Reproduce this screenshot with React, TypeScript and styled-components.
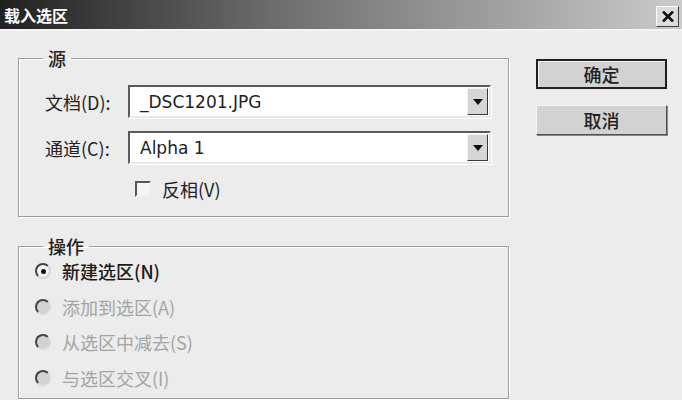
import React from "react";
import styled, { createGlobalStyle } from "styled-components";

const GlobalStyle = createGlobalStyle`
    html, body {
        margin: 0;
        padding: 0;
        background: #ececec;
    }
    body {
        font-family: "Noto Sans CJK SC", "DejaVu Sans", sans-serif;
    }
`;

const options = [
    { label: "新建选区(N)", checked: true, disabled: false },
    { label: "添加到选区(A)", checked: false, disabled: true },
    { label: "从选区中减去(S)", checked: false, disabled: true },
    { label: "与选区交叉(I)", checked: false, disabled: true },
];

const Caret = () => (
    <svg width='10' height='6' viewBox='0 0 10 6'>
        <path d='M0 0 H10 L5 6 Z' fill='#111' />
    </svg>
);

export default function App() {
    return (
        <>
            <GlobalStyle />
            <Window>
                <TitleBar>
                    <Title>载入选区</Title>
                    <CloseButton>
                        <svg width='12' height='11' viewBox='0 0 12 11'>
                            <path
                                d='M1 0.5 L11 10.5 M11 0.5 L1 10.5'
                                stroke='#111'
                                strokeWidth='2.6'
                            />
                        </svg>
                    </CloseButton>
                </TitleBar>

                <Body>
                    <Left>
                        <Group $height={170} $top={16}>
                            <Legend>源</Legend>
                            <FieldRow>
                                <FieldLabel>文档(D):</FieldLabel>
                                <Select>
                                    <SelectText>_DSC1201.JPG</SelectText>
                                    <ArrowButton>
                                        <Caret />
                                    </ArrowButton>
                                </Select>
                            </FieldRow>
                            <FieldRow>
                                <FieldLabel>通道(C):</FieldLabel>
                                <Select>
                                    <SelectText>Alpha 1</SelectText>
                                    <ArrowButton>
                                        <Caret />
                                    </ArrowButton>
                                </Select>
                            </FieldRow>
                            <CheckRow>
                                <CheckBox />
                                <CheckLabel>反相(V)</CheckLabel>
                            </CheckRow>
                        </Group>

                        <Group $height={164} $top={0}>
                            <Legend>操作</Legend>
                            <RadioList>
                                {options.map((o) => (
                                    <RadioRow key={o.label}>
                                        <Radio $disabled={o.disabled}>
                                            {o.checked && <Dot />}
                                        </Radio>
                                        <RadioLabel $disabled={o.disabled}>
                                            {o.label}
                                        </RadioLabel>
                                    </RadioRow>
                                ))}
                            </RadioList>
                        </Group>
                    </Left>

                    <Buttons>
                        <Button $default>确定</Button>
                        <Button>取消</Button>
                    </Buttons>
                </Body>
            </Window>
        </>
    );
}

const Window = styled.div`
    width: 682px;
    height: 400px;
    background: #ececec;
    overflow: hidden;
`;

const TitleBar = styled.div`
    height: 29px;
    display: flex;
    align-items: center;
    justify-content: space-between;
    padding: 0 3px 0 4px;
    background: linear-gradient(to right, #202020, #6c6c6c 40%, #cbcbcb);
    border-bottom: 2px solid #f4f4f4;
`;

const Title = styled.div`
    color: #fff;
    font-weight: 700;
    font-size: 16px;
    font-family: "Noto Sans CJK SC", sans-serif;
    line-height: 1;
`;

const CloseButton = styled.div`
    width: 23px;
    height: 21px;
    box-sizing: border-box;
    display: flex;
    align-items: center;
    justify-content: center;
    background: #dcdcdc;
    border: 1px solid;
    border-color: #fff #404040 #404040 #fff;
    margin-top: 3px;
`;

const Body = styled.div`
    display: flex;
    align-items: flex-start;
    padding: 16px 0 0 18px;
`;

const Left = styled.div`
    display: flex;
    flex-direction: column;
    gap: 18px;
    width: 491px;
`;

const Group = styled.fieldset<{ $height: number; $top: number }>`
    margin: 0;
    height: ${(p) => p.$height}px;
    box-sizing: border-box;
    border: 1px solid #9c9c9c;
    box-shadow: inset 1px 1px 0 #fff, 1px 1px 0 #fff;
    padding: ${(p) => p.$top}px 17px 0 26px;
    display: flex;
    flex-direction: column;
`;

const Legend = styled.legend`
    margin-left: -2px;
    padding: 0 5px;
    font-size: 18px;
    line-height: 22px;
    color: #222;
    font-weight: 500;
`;

const FieldRow = styled.div`
    display: flex;
    align-items: center;
    margin-bottom: 13px;
`;

const FieldLabel = styled.div`
    width: 83px;
    font-size: 18px;
    color: #222;
    white-space: nowrap;
`;

const Select = styled.div`
    flex: 1;
    height: 33px;
    box-sizing: border-box;
    display: flex;
    align-items: center;
    background: #fff;
    border: 2px solid;
    border-color: #5a5a5a #e8e8e8 #e8e8e8 #5a5a5a;
    box-shadow: 1px 1px 0 #fff;
    padding: 0 1px 0 10px;
`;

const SelectText = styled.div`
    flex: 1;
    font-family: "DejaVu Sans", sans-serif;
    font-size: 17px;
    color: #222;
`;

const ArrowButton = styled.div`
    width: 21px;
    height: 27px;
    box-sizing: border-box;
    display: flex;
    align-items: center;
    justify-content: center;
    background: #d6d6d6;
    border: 1px solid;
    border-color: #f4f4f4 #3a3a3a #3a3a3a #f4f4f4;
`;

const CheckRow = styled.div`
    display: flex;
    align-items: center;
    gap: 11px;
    padding-left: 90px;
    margin-top: -1px;
`;

const CheckBox = styled.div`
    width: 16px;
    height: 16px;
    box-sizing: border-box;
    border: 2px solid;
    border-color: #555 #f0f0f0 #f0f0f0 #555;
    background: #f4f4f4;
`;

const CheckLabel = styled.div`
    font-size: 18px;
    color: #222;
`;

const RadioList = styled.div`
    display: flex;
    flex-direction: column;
    gap: 7.5px;
    margin-left: -10px;
`;

const RadioRow = styled.div`
    display: flex;
    align-items: center;
    gap: 11px;
    height: 28px;
`;

const Radio = styled.div<{ $disabled?: boolean }>`
    width: 16px;
    height: 16px;
    box-sizing: border-box;
    border-radius: 50%;
    border: 2px solid;
    border-color: #444 #d8d8d8 #d8d8d8 #444;
    background: ${(p) => (p.$disabled ? "#d2d2d2" : "#f4f4f4")};
    display: flex;
    align-items: center;
    justify-content: center;
`;

const Dot = styled.div`
    width: 5px;
    height: 5px;
    border-radius: 50%;
    background: #111;
`;

const RadioLabel = styled.div<{ $disabled?: boolean }>`
    font-size: 18px;
    color: ${(p) => (p.$disabled ? "#a4a4a4" : "#1a1a1a")};
    font-weight: ${(p) => (p.$disabled ? 400 : 500)};
`;

const Buttons = styled.div`
    display: flex;
    flex-direction: column;
    gap: 16px;
    margin-left: 27px;
    padding-top: 12px;
`;

const Button = styled.div<{ $default?: boolean }>`
    width: 131px;
    height: 30px;
    box-sizing: border-box;
    display: flex;
    align-items: center;
    justify-content: center;
    background: #d2d2d2;
    font-size: 18px;
    color: #222;
    font-weight: 500;
    border: ${(p) => (p.$default ? "2px solid #202020" : "1px solid")};
    border-color: ${(p) =>
        p.$default ? "#202020" : "#f6f6f6 #505050 #505050 #f6f6f6"};
    box-shadow: ${(p) =>
        p.$default ? "inset 1px 1px 0 #f4f4f4" : "1px 1px 0 #888"};
`;
